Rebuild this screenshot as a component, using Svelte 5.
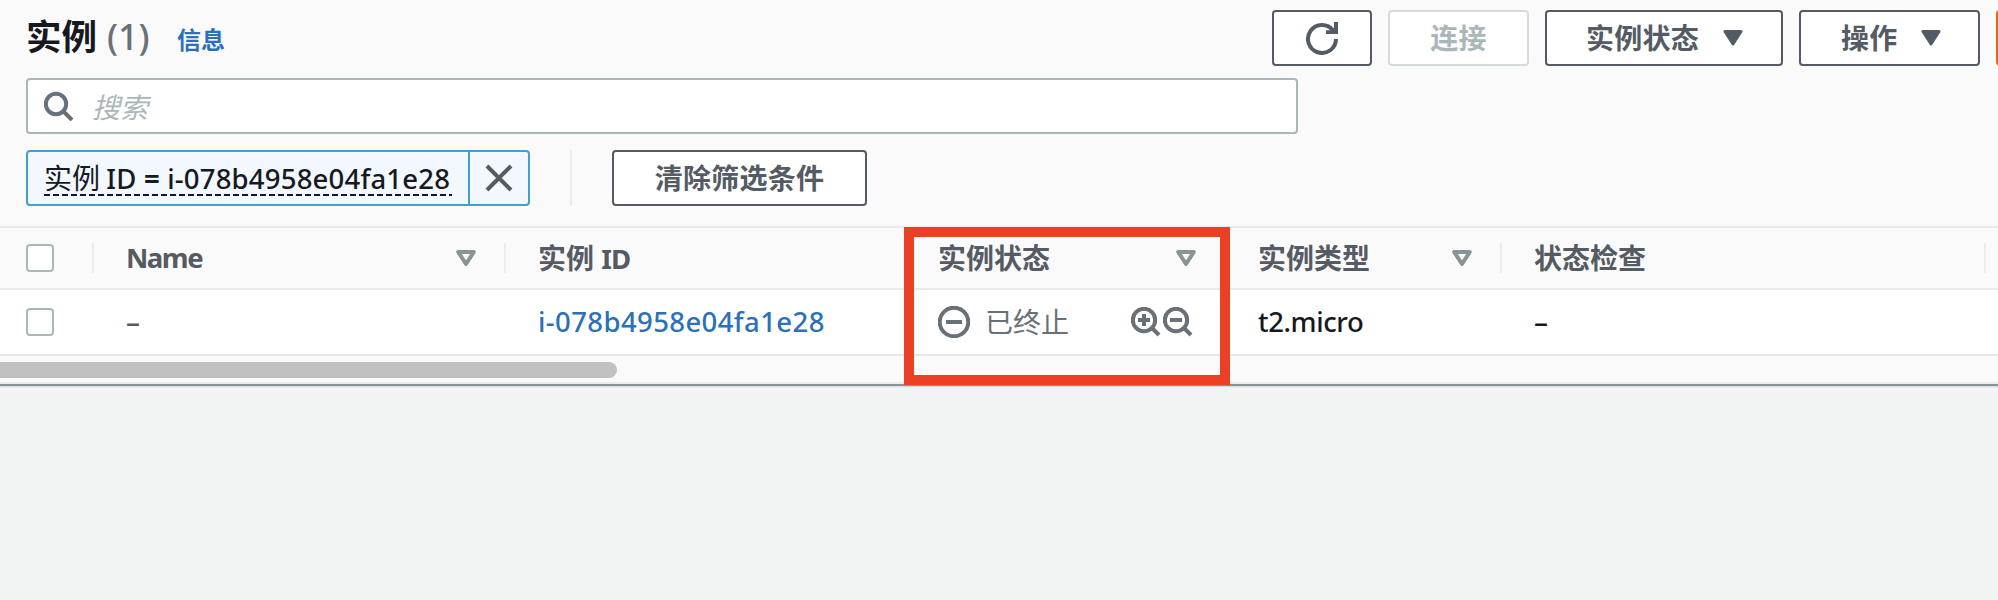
<script>
  const columns = [
    { title: 'Name', name: true, sort: true, divider: true, width: 412, pad: 34 },
    { title: '实例', latin: 'ID', sort: false, divider: true, width: 401, pad: 34 },
    { title: '实例状态', sort: true, width: 319, pad: 33 },
    { title: '实例类型', sort: true, divider: false, width: 276, pad: 34 },
    { title: '状态检查', sort: false, divider: true, width: 484, pad: 34 }
  ];
  const id = 'i-078b4958e04fa1e28';
</script>

{#snippet caret()}
  <svg class="caret" width="20" height="16" viewBox="0 0 20 16"><path d="M2 1.5H18L10 14Z" /></svg>
{/snippet}

<main>
  <section class="panel">
    <header>
      <h1>实例<span class="count">(1)</span></h1>
      <a class="info" href="#info">信息</a>
      <div class="actions">
        <button class="refresh" aria-label="刷新">
          <svg width="34" height="34" viewBox="0 0 34 34"><path d="M31 18A14 14 0 1 1 28.1 9.4" /><path class="corner" d="M29 1H33V13H21V9.2H26.5L29 7.5Z" /></svg>
        </button>
        <button class="connect" disabled>连接</button>
        <button class="state">实例状态 {@render caret()}</button>
        <button class="ops">操作 {@render caret()}</button>
        <button class="launch" aria-label="启动"></button>
      </div>
    </header>

    <div class="search">
      <svg width="30" height="30" viewBox="0 0 30 30"><circle cx="12" cy="13" r="10.2" /><path d="M19 20L28 29" /></svg>
      <span class="placeholder">搜索</span>
    </div>

    <div class="filters">
      <div class="token">
        <div class="label">
          <div class="words">实例 <span class="latin tag">ID <b>=</b> {id}</span></div>
          <svg class="dashes" width="408" height="2"><path d="M0 1H408" /></svg>
        </div>
        <div class="close"><svg width="28" height="28" viewBox="0 0 28 28"><path d="M2 2L26 26M26 2L2 26" /></svg></div>
      </div>
      <div class="rule"></div>
      <button class="clear">清除筛选条件</button>
    </div>

    <div class="row head">
      <div class="check"><i></i></div>
      {#each columns as c}
        <div class="cell" class:divider={c.divider} style="width:{c.width}px;padding-left:{c.pad}px">
          <span class:name={c.name}>{c.title}{#if c.latin}&nbsp;<span class="latin bold">{c.latin}</span>{/if}</span>
          {#if c.sort}
            <svg width="20" height="16" viewBox="0 0 20 16"><path d="M2.2 2H17.8L10 14Z" /></svg>
          {/if}
        </div>
      {/each}
      <div class="cell divider end"></div>
    </div>

    <div class="row body">
      <div class="check"><i></i></div>
      <div class="cell muted" style="width:412px;padding-left:34px">–</div>
      <div class="cell" style="width:401px;padding-left:34px"><a class="latin" href="#instance">{id}</a></div>
      <div class="cell status" style="width:319px;padding-left:33px">
        <svg width="32" height="32" viewBox="0 0 32 32"><circle cx="16" cy="16" r="14.3" /><path d="M8 16H24" /></svg>
        <span>已终止</span>
        <div class="lenses">
          <svg width="30" height="30" viewBox="0 0 30 30"><circle cx="13" cy="13" r="11.2" /><path d="M21 21L28 28M7 13H19M13 7V19" /></svg>
          <svg width="30" height="30" viewBox="0 0 30 30"><circle cx="13" cy="13" r="11.2" /><path d="M21 21L28 28M7 13H19" /></svg>
        </div>
      </div>
      <div class="cell latin kind" style="width:276px;padding-left:34px">t2.micro</div>
      <div class="cell" style="width:484px;padding-left:34px">–</div>
    </div>

    <div class="track"><div class="thumb"></div></div>
    <div class="highlight"></div>
  </section>
</main>

<style>
  :global(body) { background: #f2f3f3; }
  * { box-sizing: border-box; }
  main {
    width: 1998px;
    height: 600px;
    overflow: hidden;
    background: #f2f3f3;
    color: #16191f;
    font: 28px/40px 'Noto Sans', 'Noto Sans CJK SC', sans-serif;
  }
  svg { display: block; flex: none; fill: none; }
  a { color: #2c70b9; text-decoration: none; }
  button {
    height: 56px;
    padding: 0 0 2px;
    border: 2px solid #545b64;
    border-radius: 4px;
    background: #fff;
    color: #545b64;
    font: 700 28px/40px 'Noto Sans CJK SC', sans-serif;
    letter-spacing: 0.25px;
    display: flex;
    align-items: center;
    flex: none;
    white-space: nowrap;
  }
  .latin { font-family: 'Noto Sans', sans-serif; font-size: 27.5px; font-weight: 500; letter-spacing: 0.4px; white-space: nowrap; }
  .tag { letter-spacing: 0.2px; }
  .tag b { font-weight: 700; }
  .bold { font-weight: 700; letter-spacing: -0.9px; }
  .kind { letter-spacing: -0.4px; }
  .name { font-size: 27.5px; letter-spacing: -1.5px; }
  .panel { position: relative; height: 386px; background: #fafafa; border-bottom: 2px solid #879596; box-shadow: 0 1px 1px #d5dbdb; }
  header { display: flex; height: 78px; padding-left: 26px; overflow: hidden; }
  h1 { margin: 0; width: 151px; font: 700 35.5px/70px 'Noto Sans CJK SC', sans-serif; white-space: nowrap; }
  .count { margin-left: 10px; color: #687078; font-weight: 500; font-size: 35.5px; letter-spacing: 0; font-family: 'Noto Sans', sans-serif; }
  .info { font: 700 24px/78px 'Noto Sans CJK SC', sans-serif; }
  .actions { display: flex; gap: 16px; margin: 10px 0 0 auto; width: 726px; flex: none; }
  .refresh { width: 100px; justify-content: center; padding: 0; }
  .refresh path { stroke: #545b64; stroke-width: 4; }
  .refresh .corner { fill: #545b64; stroke: none; }
  .connect { width: 141px; justify-content: center; border-color: #d5dbdb; color: #aab7b8; }
  .state { width: 238px; padding-left: 39px; gap: 24px; }
  .ops { width: 181px; padding-left: 40px; gap: 23px; }
  .launch { width: 20px; background: #ec7211; border-color: #dd6b10; }
  .caret { margin-top: 2px; }
  .caret path { fill: #545b64; stroke: #545b64; stroke-width: 3; stroke-linejoin: round; }
  .search {
    width: 1272px;
    height: 56px;
    margin-left: 26px;
    padding-left: 16px;
    border: 2px solid #aab7b8;
    border-radius: 4px;
    background: #fff;
    display: flex;
    align-items: center;
    gap: 18px;
  }
  .search svg { stroke: #687078; stroke-width: 4; }
  .placeholder { color: #aab7b8; font-style: italic; font-family: 'Noto Sans CJK SC', sans-serif; }
  .filters { display: flex; height: 92px; padding: 16px 0 0 26px; }
  .token { width: 504px; height: 56px; border: 2px solid #44a0c8; border-radius: 4px; background: #f2f8fd; display: flex; }
  .label { width: 442px; padding: 6px 0 0 16px; border-right: 2px solid #44a0c8; }
  .words { height: 36px; line-height: 38px; white-space: nowrap; font-family: 'Noto Sans CJK SC', sans-serif; }
  .dashes path { stroke: #16191f; stroke-width: 2; stroke-dasharray: 6 3; }
  .close { flex: 1; display: flex; align-items: center; justify-content: center; }
  .close path { stroke: #545b64; stroke-width: 4; }
  .rule { width: 2px; height: 56px; margin: 0 40px; background: #eaeded; }
  .clear { width: 255px; justify-content: center; }
  .row { display: flex; align-items: center; }
  .head { height: 64px; border: solid #eaeaea; border-width: 2px 0; color: #545b64; font-weight: 700; }
  .body { height: 66px; background: #fff; border-bottom: 2px solid #e6e8e8; }
  .check { width: 92px; padding-left: 26px; flex: none; }
  .check i { display: block; width: 28px; height: 28px; border: 2px solid #aab7b8; border-radius: 4px; background: #fff; }
  .cell { position: relative; height: 40px; flex: none; display: flex; justify-content: space-between; padding-right: 28px; white-space: nowrap; align-items: center; }
  .body .cell { font-weight: 500; }
  .divider::before { content: ''; position: absolute; left: 0; top: 5px; width: 2px; height: 30px; background: #eaeded; }
  .end { width: 12px; padding: 0; }
  .head svg path { stroke: #879596; stroke-width: 4; stroke-linejoin: round; }
  .muted { color: #545b64; }
  .body .status { color: #687078; justify-content: flex-start; padding-right: 31px; font-weight: 400; }
  .status svg { stroke: #687078; stroke-width: 4; }
  .status span { margin-left: 15px; }
  .lenses { display: flex; gap: 2px; margin-left: auto; }
  .track { height: 28px; padding-top: 6px; border-bottom: 2px solid #eaeded; }
  .thumb { width: 617px; height: 16px; border-radius: 0 8px 8px 0; background: #c1c1c1; }
  .highlight { position: absolute; left: 904px; top: 227px; width: 326px; height: 158px; border: 10px solid #ec4025; }
</style>
